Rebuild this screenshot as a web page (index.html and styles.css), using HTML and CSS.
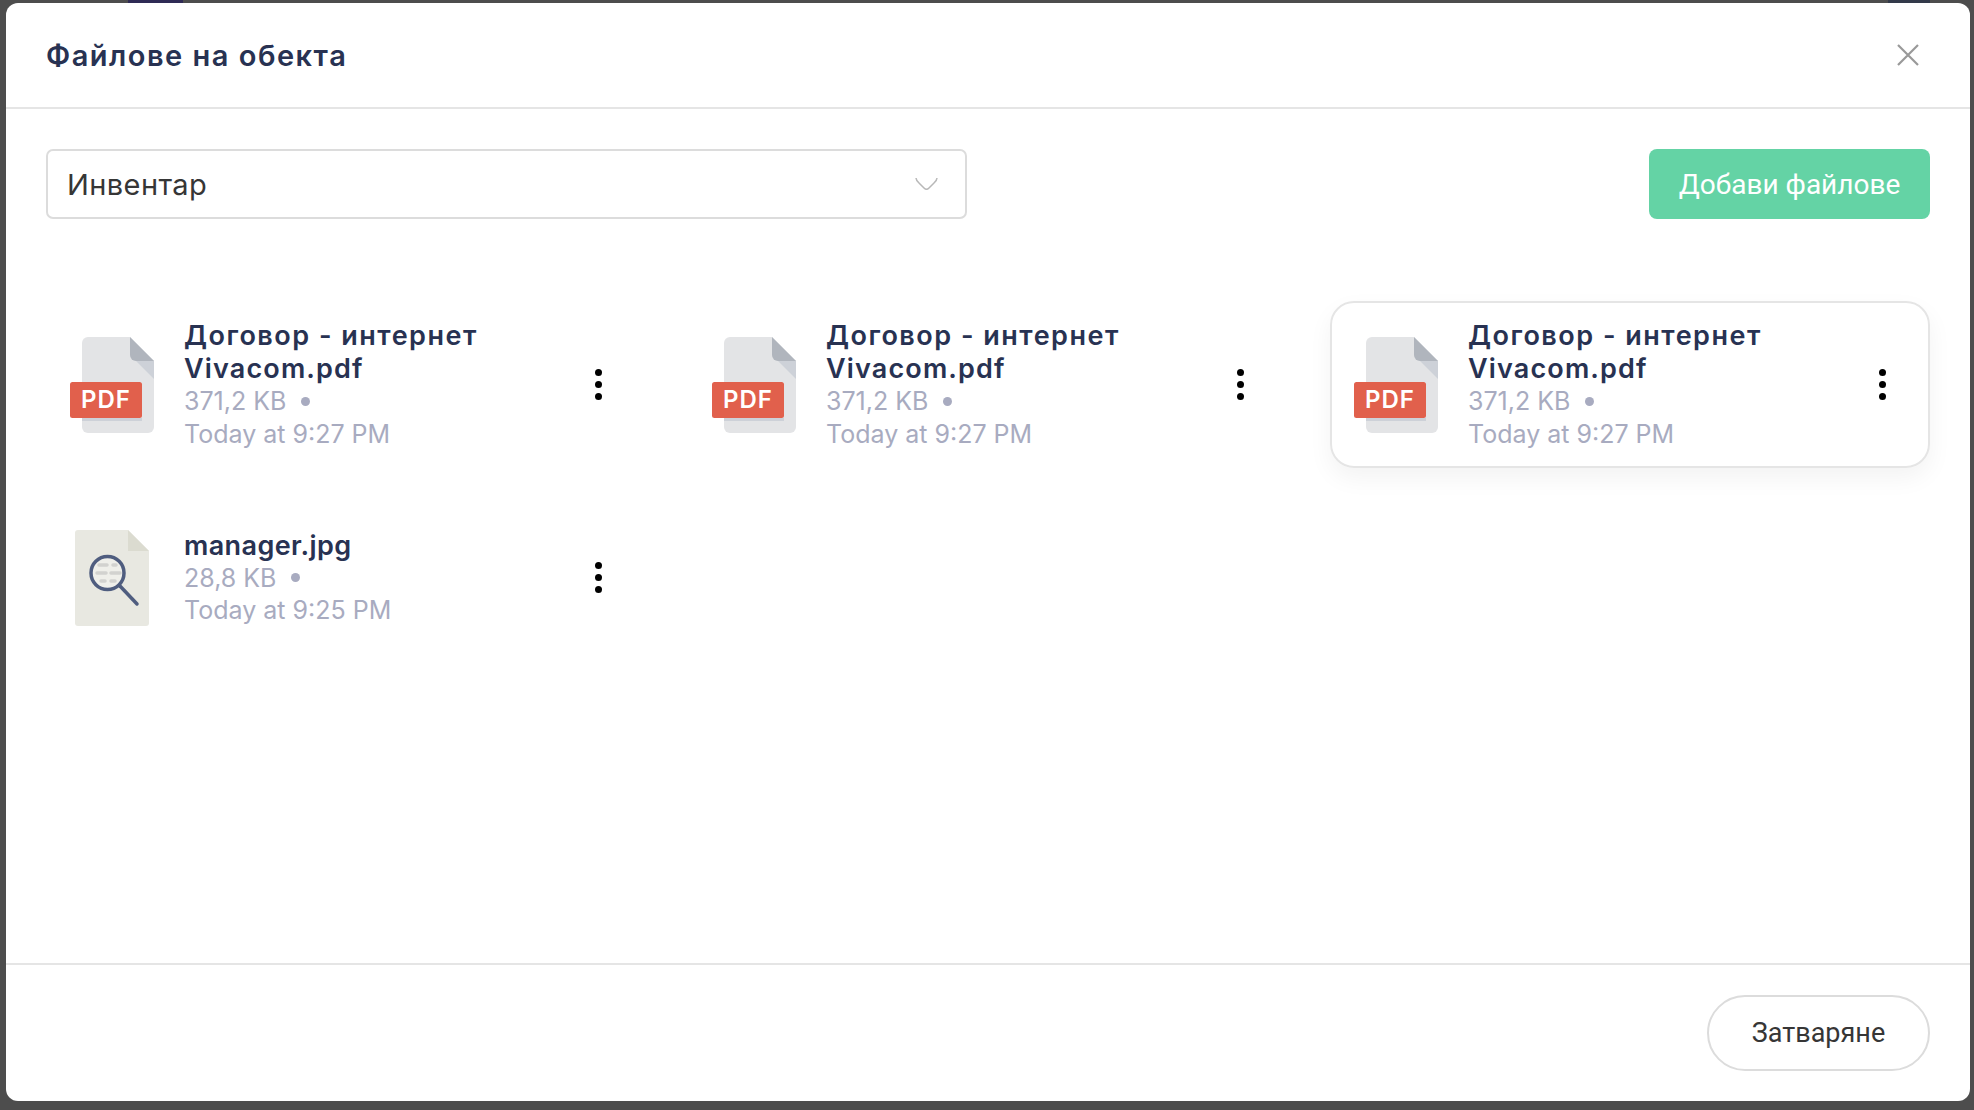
FILE: index.html
```html
<!DOCTYPE html>
<html lang="bg">
<head>
<meta charset="utf-8">
<title>Файлове на обекта</title>
<link rel="stylesheet" href="styles.css">
</head>
<body>
<svg width="0" height="0" class="defs" aria-hidden="true">
  <symbol id="pdf" viewBox="0 0 84 96">
    <path d="M12 6a6 6 0 0 1 6-6h42l24 24v66a6 6 0 0 1-6 6H18a6 6 0 0 1-6-6z" fill="#e3e4e6"/>
    <path d="M84 24v18L64 22h16z" fill="#cdd1d8"/>
    <path d="M60 0l24 24H66a6 6 0 0 1-6-6z" fill="#b0b5bd"/>
    <path d="M12 81h60v3H12z" fill="#cdd1d8"/>
    <rect x="0" y="45" width="72" height="36" rx="2.500" fill="#e1604c"/>
  </symbol>
  <symbol id="jpg" viewBox="0 0 84 96">
    <path d="M5 3a3 3 0 0 1 3-3h50l21 21v72a3 3 0 0 1-3 3H8a3 3 0 0 1-3-3z" fill="#e8e8e1"/>
    <path d="M58 0l21 21H58z" fill="#dbdbd0"/>
    <circle cx="37.500" cy="43" r="16.500" fill="#efefea"/>
    <g stroke="#d2d2cf" stroke-width="3.500" stroke-linecap="round">
      <path d="M29 35h8M43 35h3M27 43h9M41 43h9M31 51h4M41 51h4"/>
    </g>
    <circle cx="37.500" cy="43" r="16.500" fill="none" stroke="#4f5d7f" stroke-width="3.500"/>
    <path d="M50 56l17 18" stroke="#4f5d7f" stroke-width="3.500" stroke-linecap="round"/>
  </symbol>
</svg>

<span class="peek peek-left"></span>
<span class="peek peek-right"></span>

<main class="modal">
  <header class="modal-head">
    <h1 class="modal-title">Файлове на обекта</h1>
    <button class="close-x" aria-label="Затваряне">
      <svg width="22" height="22" viewBox="0 0 22 22"><path d="M1 1l20 20M21 1L1 21" stroke="#999" stroke-width="2.200" fill="none"/></svg>
    </button>
  </header>

  <section class="modal-body">
    <div class="toolbar">
      <div class="select">
        <span>Инвентар</span>
        <svg width="23" height="14" viewBox="0 0 23 14"><path d="M1 1c0 2 1 3 3 5l5 5c1.500 1.500 3.500 1.500 5 0l5-5c2-2 3-3 3-5" stroke="#b8b8b8" stroke-width="1.500" fill="none"/></svg>
      </div>
      <button class="btn-add" lang="en">Добави файлове</button>
    </div>

    <div class="files">
      <article class="file">
        <div class="file-icon">
          <svg width="84" height="96"><use href="#pdf"/></svg>
          <span class="pdf-label" lang="en">PDF</span>
        </div>
        <div class="file-text">
          <div class="file-name">Договор - интернет <span class="latin">Vivacom.pdf</span></div>
          <div class="file-meta"><span>371,2 KB</span><i class="meta-dot"></i></div>
          <div class="file-meta">Today at 9:27 PM</div>
        </div>
        <div class="kebab"><i></i><i></i><i></i></div>
      </article>

      <article class="file">
        <div class="file-icon">
          <svg width="84" height="96"><use href="#pdf"/></svg>
          <span class="pdf-label" lang="en">PDF</span>
        </div>
        <div class="file-text">
          <div class="file-name">Договор - интернет <span class="latin">Vivacom.pdf</span></div>
          <div class="file-meta"><span>371,2 KB</span><i class="meta-dot"></i></div>
          <div class="file-meta">Today at 9:27 PM</div>
        </div>
        <div class="kebab"><i></i><i></i><i></i></div>
      </article>

      <article class="file file-active">
        <div class="file-icon">
          <svg width="84" height="96"><use href="#pdf"/></svg>
          <span class="pdf-label" lang="en">PDF</span>
        </div>
        <div class="file-text">
          <div class="file-name">Договор - интернет <span class="latin">Vivacom.pdf</span></div>
          <div class="file-meta"><span>371,2 KB</span><i class="meta-dot"></i></div>
          <div class="file-meta">Today at 9:27 PM</div>
        </div>
        <div class="kebab"><i></i><i></i><i></i></div>
      </article>

      <article class="file">
        <div class="file-icon">
          <svg width="84" height="96"><use href="#jpg"/></svg>
        </div>
        <div class="file-text">
          <div class="file-name"><span class="latin-tight">manager.jpg</span></div>
          <div class="file-meta"><span>28,8 KB</span><i class="meta-dot"></i></div>
          <div class="file-meta">Today at 9:25 PM</div>
        </div>
        <div class="kebab"><i></i><i></i><i></i></div>
      </article>
    </div>
  </section>

  <footer class="modal-foot">
    <button class="btn-close" lang="en">Затваряне</button>
  </footer>
</main>
</body>
</html>
```
FILE: styles.css
```css
* { box-sizing: border-box; }
html, body { height: 100%; }
body {
  margin: 0;
  padding: 3px 4px 9px 6px;
  background: #4d4d4d;
  font-family: Inter, "Noto Sans", sans-serif;
  overflow: hidden;
}
.defs { position: absolute; }
.peek { position: absolute; top: 0; height: 3px; }
.peek-left { left: 128px; width: 55px; background: #2f2a55; }
.peek-right { left: 1888px; width: 42px; background: #333a4a; }

.modal {
  height: 100%;
  background: #fff;
  border-radius: 12px;
  display: flex;
  flex-direction: column;
}
.modal-head {
  height: 106px;
  flex: none;
  padding: 0 51px 0 40px;
  border-bottom: 2px solid #e5e5e5;
  display: flex;
  align-items: center;
  justify-content: space-between;
}
.modal-title {
  margin: 0;
  font-size: 29px;
  letter-spacing: 1.500px;
  font-weight: 600;
  color: #283252;
}
.close-x {
  padding: 0;
  border: 0;
  background: none;
  display: flex;
}
.modal-body {
  flex: 1;
  padding: 40px 40px 0;
}
.toolbar {
  display: flex;
  justify-content: space-between;
  margin-bottom: 82px;
}
.select {
  width: 921px;
  height: 70px;
  padding: 0 27px 0 19px;
  border: 2px solid #dcdcdc;
  border-radius: 7px;
  display: flex;
  align-items: center;
  justify-content: space-between;
  font-size: 29px;
  letter-spacing: 0.400px;
  color: #363636;
}
.btn-add {
  width: 281px;
  height: 70px;
  border: 0;
  border-radius: 8px;
  background: #64d3a5;
  color: #fff;
  font-family: Roboto, sans-serif;
  font-size: 28px;
}
.files {
  display: grid;
  grid-template-columns: repeat(3, 1fr);
  gap: 42.500px 42px;
  align-items: start;
}
.file {
  display: flex;
  align-items: center;
  padding: 16px 42px 16px 22px;
  border: 2px solid transparent;
  border-radius: 24px;
}
.file-active {
  border-color: #e5e5e5;
  box-shadow: 0 10px 24px rgba(0, 0, 0, 0.05);
}
.file-icon {
  position: relative;
  flex: none;
  width: 84px;
  height: 96px;
  margin-right: 30px;
}
.file-icon svg { display: block; }
.pdf-label {
  position: absolute;
  left: 0;
  top: 45px;
  width: 72px;
  height: 36px;
  line-height: 36px;
  text-align: center;
  font-family: Inter, sans-serif;
  font-weight: 600;
  font-size: 24px;
  letter-spacing: 1px;
  color: #fff;
}
.file-text {
  flex: 1;
  min-width: 0;
}
.file-name {
  font-size: 27px;
  letter-spacing: 1.500px;
  line-height: 33px;
  font-weight: 600;
  color: #283252;
}
.latin { letter-spacing: 1.150px; }
.latin-tight { letter-spacing: 0.400px; }
.file-meta {
  display: flex;
  align-items: center;
  font-size: 25px;
  line-height: 32.500px;
  color: #a8abc0;
}
.meta-dot {
  width: 9px;
  height: 9px;
  margin-left: 15px;
  border-radius: 50%;
  background: #a8abc0;
}
.kebab {
  flex: none;
  display: flex;
  flex-direction: column;
  gap: 4.700px;
}
.kebab i {
  width: 7px;
  height: 7px;
  border-radius: 50%;
  background: #000;
}
.modal-foot {
  height: 138px;
  flex: none;
  padding: 30px 40px 0;
  border-top: 2px solid #e5e5e5;
  display: flex;
  justify-content: flex-end;
  align-items: flex-start;
}
.btn-close {
  width: 223px;
  height: 76px;
  border: 2px solid #dcdcdc;
  border-radius: 38px;
  background: #fff;
  color: #363636;
  font-family: Roboto, sans-serif;
  font-size: 27px;
}
```
